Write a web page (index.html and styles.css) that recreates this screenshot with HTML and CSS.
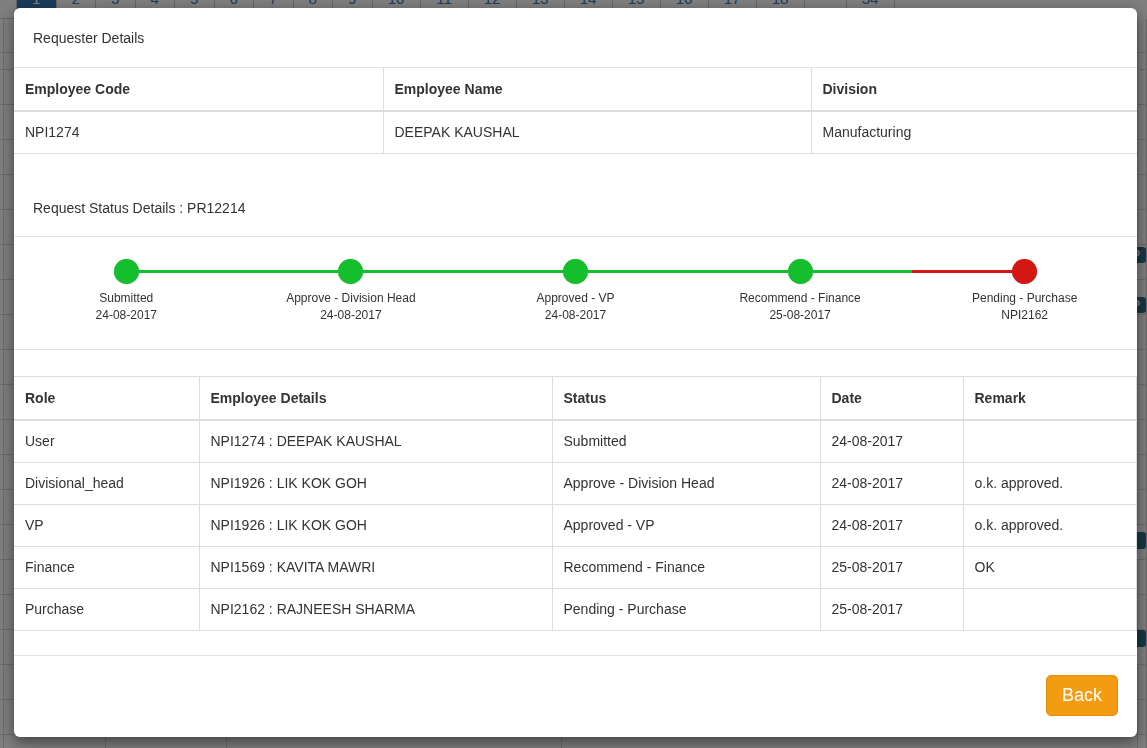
FILE: index.html
```html
<!DOCTYPE html>
<html lang="en">
<head>
<meta charset="utf-8">
<title>Request Status</title>
<link rel="stylesheet" href="styles.css">
</head>
<body>
<div class="page">
  <ul class="pager">
    <li class="pg pg-edge"></li>
    <li class="pg active">1</li>
    <li class="pg">2</li>
    <li class="pg">3</li>
    <li class="pg">4</li>
    <li class="pg">5</li>
    <li class="pg">6</li>
    <li class="pg">7</li>
    <li class="pg">8</li>
    <li class="pg">9</li>
    <li class="pg pg2">10</li>
    <li class="pg pg2">11</li>
    <li class="pg pg2">12</li>
    <li class="pg pg2">13</li>
    <li class="pg pg2">14</li>
    <li class="pg pg2">15</li>
    <li class="pg pg2">16</li>
    <li class="pg pg2">17</li>
    <li class="pg pg2">18</li>
    <li class="pg pg-gap"></li>
    <li class="pg pg2">34</li>
  </ul>
  <div class="grid">
    <div class="grow grow-a"><span class="gc c1"></span><span class="gc c2"></span><span class="gc c3"></span><span class="gc c4"></span><span class="gc c5"></span><span class="gc c6"></span></div>
    <div class="grow grow-b"><span class="gc c1"></span><span class="gc c2"></span><span class="gc c3"></span><span class="gc c4"></span><span class="gc c5"></span><span class="gc c6"></span></div>
    <div class="grow"><span class="gc c1"></span><span class="gc c2"></span><span class="gc c3"></span><span class="gc c4"></span><span class="gc c5"></span><span class="gc c6"></span></div>
    <div class="grow"><span class="gc c1"></span><span class="gc c2"></span><span class="gc c3"></span><span class="gc c4"></span><span class="gc c5"></span><span class="gc c6"></span></div>
    <div class="grow"><span class="gc c1"></span><span class="gc c2"></span><span class="gc c3"></span><span class="gc c4"></span><span class="gc c5"></span><span class="gc c6"></span></div>
    <div class="grow"><span class="gc c1"></span><span class="gc c2"></span><span class="gc c3"></span><span class="gc c4"></span><span class="gc c5"></span><span class="gc c6"></span></div>
    <div class="grow"><span class="gc c1"></span><span class="gc c2"></span><span class="gc c3"></span><span class="gc c4"></span><span class="gc c5"></span><span class="gc c6"></span></div>
    <div class="grow"><span class="gc c1"></span><span class="gc c2"></span><span class="gc c3"></span><span class="gc c4"></span><span class="gc c5"></span><span class="gc c6"><b class="tag tag-top">P</b></span></div>
    <div class="grow"><span class="gc c1"></span><span class="gc c2"></span><span class="gc c3"></span><span class="gc c4"></span><span class="gc c5"></span><span class="gc c6"><b class="tag tag-mid">P</b></span></div>
    <div class="grow"><span class="gc c1"></span><span class="gc c2"></span><span class="gc c3"></span><span class="gc c4"></span><span class="gc c5"></span><span class="gc c6"></span></div>
    <div class="grow"><span class="gc c1"></span><span class="gc c2"></span><span class="gc c3"></span><span class="gc c4"></span><span class="gc c5"></span><span class="gc c6"></span></div>
    <div class="grow"><span class="gc c1"></span><span class="gc c2"></span><span class="gc c3"></span><span class="gc c4"></span><span class="gc c5"></span><span class="gc c6"></span></div>
    <div class="grow"><span class="gc c1"></span><span class="gc c2"></span><span class="gc c3"></span><span class="gc c4"></span><span class="gc c5"></span><span class="gc c6"></span></div>
    <div class="grow"><span class="gc c1"></span><span class="gc c2"></span><span class="gc c3"></span><span class="gc c4"></span><span class="gc c5"></span><span class="gc c6"></span></div>
    <div class="grow"><span class="gc c1"></span><span class="gc c2"></span><span class="gc c3"></span><span class="gc c4"></span><span class="gc c5"></span><span class="gc c6"></span></div>
    <div class="grow"><span class="gc c1"></span><span class="gc c2"></span><span class="gc c3"></span><span class="gc c4"></span><span class="gc c5"></span><span class="gc c6"><b class="tag tag-s tag-low"></b></span></div>
    <div class="grow"><span class="gc c1"></span><span class="gc c2"></span><span class="gc c3"></span><span class="gc c4"></span><span class="gc c5"></span><span class="gc c6"></span></div>
    <div class="grow"><span class="gc c1"></span><span class="gc c2"></span><span class="gc c3"></span><span class="gc c4"></span><span class="gc c5"></span><span class="gc c6"></span></div>
    <div class="grow"><span class="gc c1"></span><span class="gc c2"></span><span class="gc c3"></span><span class="gc c4"></span><span class="gc c5"></span><span class="gc c6"><b class="tag tag-s tag-edge"></b></span></div>
    <div class="grow"><span class="gc c1"></span><span class="gc c2"></span><span class="gc c3"></span><span class="gc c4"></span><span class="gc c5"></span><span class="gc c6"></span></div>
    <div class="grow"><span class="gc c1"></span><span class="gc c2"></span><span class="gc c3"></span><span class="gc c4"></span><span class="gc c5"></span><span class="gc c6"></span></div>
    <div class="grow"><span class="gc c1"></span><span class="gc c2"></span><span class="gc c3"></span><span class="gc c4"></span><span class="gc c5"></span><span class="gc c6"></span></div>
  </div>
</div>

<div class="backdrop"></div>

<div class="modal">
  <div class="modal-content">
    <div class="sec-head">Requester Details</div>
    <table class="tbl tbl-req">
      <colgroup>
        <col class="w-code"><col class="w-name"><col>
      </colgroup>
      <thead>
        <tr><th>Employee Code</th><th>Employee Name</th><th>Division</th></tr>
      </thead>
      <tbody>
        <tr><td>NPI1274</td><td>DEEPAK KAUSHAL</td><td>Manufacturing</td></tr>
      </tbody>
    </table>

    <div class="sec-head sec-gap">Request Status Details : PR12214</div>
    <div class="timeline">
      <div class="step">
        <div class="track"><span class="seg seg-none"></span><span class="dot"></span><span class="seg"></span></div>
        <div class="lbl">Submitted<br>24-08-2017</div>
      </div>
      <div class="step">
        <div class="track"><span class="seg"></span><span class="dot"></span><span class="seg"></span></div>
        <div class="lbl">Approve - Division Head<br>24-08-2017</div>
      </div>
      <div class="step">
        <div class="track"><span class="seg"></span><span class="dot"></span><span class="seg"></span></div>
        <div class="lbl">Approved - VP<br>24-08-2017</div>
      </div>
      <div class="step">
        <div class="track"><span class="seg"></span><span class="dot"></span><span class="seg"></span></div>
        <div class="lbl">Recommend - Finance<br>25-08-2017</div>
      </div>
      <div class="step">
        <div class="track"><span class="seg seg-red"></span><span class="dot dot-red"></span><span class="seg seg-none"></span></div>
        <div class="lbl">Pending - Purchase<br>NPI2162</div>
      </div>
    </div>

    <table class="tbl tbl-hist">
      <colgroup>
        <col class="w-role"><col class="w-emp"><col class="w-status"><col class="w-date"><col>
      </colgroup>
      <thead>
        <tr><th>Role</th><th>Employee Details</th><th>Status</th><th>Date</th><th>Remark</th></tr>
      </thead>
      <tbody>
        <tr><td>User</td><td>NPI1274 : DEEPAK KAUSHAL</td><td>Submitted</td><td>24-08-2017</td><td></td></tr>
        <tr><td>Divisional_head</td><td>NPI1926 : LIK KOK GOH</td><td>Approve - Division Head</td><td>24-08-2017</td><td>o.k. approved.</td></tr>
        <tr><td>VP</td><td>NPI1926 : LIK KOK GOH</td><td>Approved - VP</td><td>24-08-2017</td><td>o.k. approved.</td></tr>
        <tr><td>Finance</td><td>NPI1569 : KAVITA MAWRI</td><td>Recommend - Finance</td><td>25-08-2017</td><td>OK</td></tr>
        <tr><td>Purchase</td><td>NPI2162 : RAJNEESH SHARMA</td><td>Pending - Purchase</td><td>25-08-2017</td><td></td></tr>
      </tbody>
    </table>

    <div class="modal-footer">
      <button class="btn-back" type="button">Back</button>
    </div>
  </div>
</div>
</body>
</html>
```

FILE: styles.css
```css
* { box-sizing: border-box; }

html, body {
  margin: 0;
  padding: 0;
  height: 100%;
  overflow: hidden;
}

body {
  font-family: "Liberation Sans", Arial, sans-serif;
  font-size: 14px;
  color: #333;
  background: #fff;
}

/* ---------- page behind the modal ---------- */
.page {
  margin-top: -21px;
}

.pager {
  display: flex;
  list-style: none;
  margin: 0;
  padding: 0;
  height: 40px;
}

.pg {
  width: 39.5px;
  height: 40px;
  line-height: 40px;
  text-align: center;
  color: #337ab7;
  font-size: 15px;
  border-right: 1px solid #ccc;
  border-bottom: 1px solid #ccc;
}

.pg-edge { width: 17px; }
.pg2 { width: 48px; }
.pg-gap { width: 42px; }

.pg.active {
  background: #337ab7;
  color: #fff;
}

.grid {
  display: flex;
  flex-direction: column;
}

.grow {
  display: flex;
  height: 35px;
  border-bottom: 1px solid #d8d8d8;
}

.grow-a { height: 34px; }
.grow-b { height: 17px; }

.gc {
  border-right: 1px solid #d8d8d8;
  height: 100%;
  display: flex;
  align-items: flex-start;
}

.c1 { width: 4px; }
.c2 { width: 102px; }
.c3 { width: 121px; }
.c4 { width: 335px; }
.c5 { width: 576px; }
.c6 { flex: 1; padding-left: 2px; }

.tag {
  display: inline-block;
  background: #31708f;
  color: #fff;
  font-size: 12px;
  line-height: 12px;
  padding: 2px 6px;
  border-radius: 3px;
}

.tag-top { margin-top: 2px; }
.tag-mid { margin-top: 17px; }
.tag-s { width: 14px; height: 17px; }
.tag-low { margin-top: 7px; }
.tag-edge { margin-top: 0; }

.backdrop {
  position: fixed;
  inset: 0;
  background: rgba(0, 0, 0, 0.5);
}

/* ---------- modal ---------- */
.modal {
  position: fixed;
  top: 8px;
  left: 14px;
  width: 1123px;
}

.modal-content {
  background: #fff;
  border-radius: 6px;
  box-shadow: 0 5px 15px rgba(0, 0, 0, 0.5);
  overflow: hidden;
}

.sec-head {
  height: 60px;
  padding: 20px 19px 0;
  line-height: 20px;
  border-bottom: 1px solid #e5e5e5;
}

.sec-gap {
  margin-top: 24px;
  height: 59px;
}

.tbl {
  width: 100%;
  border-collapse: collapse;
  table-layout: fixed;
}

.tbl th,
.tbl td {
  border: 1px solid #ddd;
  padding: 10px 11px;
  line-height: 21px;
  text-align: left;
  vertical-align: top;
}

.tbl th {
  font-weight: bold;
  border-bottom-width: 2px;
  padding-top: 11px;
  padding-bottom: 10px;
}

.tbl tr > :first-child { border-left: 0; }
.tbl-req tr > :last-child { border-right: 0; }
.tbl-req thead th { border-top: 0; }

.w-code { width: 369px; }
.w-name { width: 428px; }

.w-role { width: 185px; }
.w-emp { width: 353px; }
.w-status { width: 268px; }
.w-date { width: 143px; }

/* ---------- timeline ---------- */
.timeline {
  display: flex;
  padding: 22px 0 25px;
  border-bottom: 1px solid #e5e5e5;
  margin-bottom: 26px;
}

.step {
  flex: 1;
  display: flex;
  flex-direction: column;
  align-items: center;
}

.track {
  width: 100%;
  display: flex;
  align-items: center;
  height: 25px;
}

.seg {
  flex: 1;
  height: 3px;
  background: #13bf2d;
}

.seg-red { background: #d21613; }
.seg-none { background: transparent; }

.dot {
  width: 25px;
  height: 25px;
  border-radius: 50%;
  background: #13bf2d;
  box-shadow: 0 0 1px rgba(0, 0, 0, 0.35);
  flex: none;
}

.dot-red { background: #d31713; }

.lbl {
  margin-top: 6px;
  font-size: 12px;
  line-height: 17px;
  text-align: center;
  color: #333;
}

/* ---------- footer ---------- */
.modal-footer {
  margin-top: 24px;
  border-top: 1px solid #e5e5e5;
  padding: 19px 19px 21px;
  display: flex;
  justify-content: flex-end;
}

.btn-back {
  font-family: "Liberation Sans", Arial, sans-serif;
  font-size: 18px;
  line-height: 23px;
  padding: 8px 15px;
  color: #fff;
  background: #f39c12;
  border: 1px solid #e08e0b;
  border-radius: 5px;
  cursor: pointer;
}
```
